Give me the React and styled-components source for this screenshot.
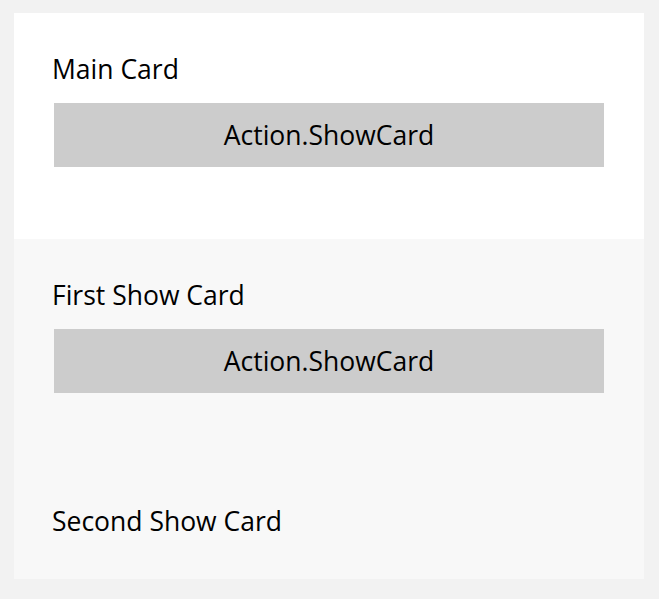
import styled, { createGlobalStyle } from "styled-components";

// STYLES

const GlobalStyle = createGlobalStyle`
    html, body {
        margin: 0;
        background-color: #f2f2f2;
        font-family: "Open Sans", "Noto Sans", sans-serif;
    }
`;

const Page = styled.div`
    padding: 13px 15px 20px 14px;
`;

const Card = styled.div`
    width: 630px;
    background-color: #ffffff;
`;

const Section = styled.div`
    display: flex;
    flex-direction: column;
    background-color: ${({ $muted }) => ($muted ? "#f8f8f8" : "#ffffff")};
    padding: ${({ $top }) => $top}px 40px ${({ $bottom }) => $bottom}px;
`;

const Title = styled.div`
    margin-left: -2px;
    font-size: 26.5px;
    line-height: 36px;
    color: #000000;
`;

const ShowCardButton = styled.button`
    margin-top: ${({ $gap }) => $gap}px;
    height: 64px;
    border: none;
    background-color: #cccccc;
    font-family: inherit;
    font-size: 26.5px;
    color: #000000;
    cursor: pointer;
`;

// HTML
const App = () => {
    return (
        <Page>
            <GlobalStyle />
            <Card>
                <Section $top={38} $bottom={72}>
                    <Title>Main Card</Title>
                    <ShowCardButton $gap={16}>Action.ShowCard</ShowCardButton>
                </Section>
                <Section $muted $top={38} $bottom={72}>
                    <Title>First Show Card</Title>
                    <ShowCardButton $gap={16}>Action.ShowCard</ShowCardButton>
                </Section>
                <Section $muted $top={38} $bottom={40}>
                    <Title>Second Show Card</Title>
                </Section>
            </Card>
        </Page>
    );
};

export default App;
